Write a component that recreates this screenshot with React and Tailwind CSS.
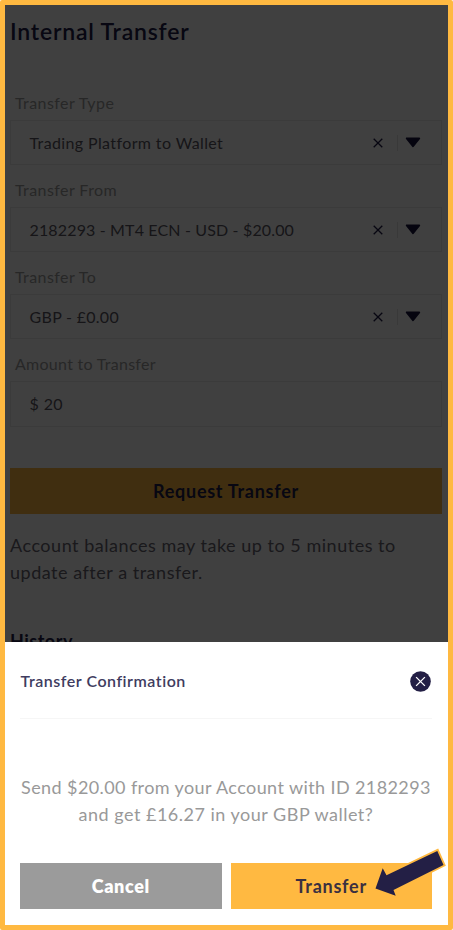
import React, { useState } from 'react';

const ClearIcon = () => (
  <svg viewBox="0 0 10 10" fill="none" stroke="#1c1843" strokeWidth="1.3" className="w-[10px] h-[10px]">
    <path d="M0.7 0.7L9.3 9.3M9.3 0.7L0.7 9.3" />
  </svg>
);

const CaretIcon = () => (
  <svg viewBox="0 0 16 11" className="w-4 h-[11px]">
    <path d="M1.8 1.4h12.4L8 9.2z" fill="#17133c" stroke="#17133c" strokeWidth="2" strokeLinejoin="round" />
  </svg>
);

const CloseIcon = () => (
  <svg viewBox="0 0 21 21" fill="none" className="w-[21px] h-[21px]">
    <circle cx="10.5" cy="10.5" r="10.3" fill="#231f45" />
    <path d="M6.1 6.1L14.9 14.9M14.9 6.1L6.1 14.9" stroke="#fff" strokeWidth="1.3" />
  </svg>
);

const ArrowIcon = () => (
  <svg viewBox="0 0 78 54" className="w-[78px] h-[54px]">
    <path
      d="M5.5 43.5L12.7 23.3L16.5 30.3L67.3 6L73.5 20L23.5 45L25.7 50.7z"
      fill="#231f45"
      stroke="#ffb941"
      strokeWidth="3.6"
      paintOrder="stroke"
    />
  </svg>
);

const fields = [
  { label: 'Transfer Type', value: 'Trading Platform to Wallet', valueStyle: 'tracking-[0.38px]' },
  { label: 'Transfer From', value: '2182293 - MT4 ECN - USD - $20.00', valueStyle: 'tracking-[0.15px]' },
  { label: 'Transfer To', value: 'GBP - £0.00', valueStyle: 'tracking-[0.3px]' },
];

function SelectField({ label, value, valueStyle }) {
  return (
    <div className="h-[87px]">
      <label className="block h-[29px] pl-[5px] text-base leading-6 tracking-[0.42px] text-[#9c9c9c]">
        {label}
      </label>
      <div className="h-[45px] flex items-center border border-[#e9e9e9] pl-[18.5px] pr-5">
        <span className={`flex-1 whitespace-nowrap text-base text-[#59565f] ${valueStyle}`}>{value}</span>
        <button type="button" aria-label="Clear"><ClearIcon /></button>
        <span className="ml-[14px] mr-[7px] h-4 w-px bg-[#e4e4e4]" />
        <CaretIcon />
      </div>
    </div>
  );
}

function App() {
  const [amount, setAmount] = useState('20');

  return (
    <div className="relative h-[930px] w-[453px] overflow-hidden rounded-[2px] border-5 border-[#ffb941] bg-white font-['Lato',sans-serif]">
      <div className="pl-[5px] pr-1.5 pt-[11px]">
        <h1 className="h-[75px] text-[23px] leading-[30px] font-semibold tracking-[0.8px] text-[#201c48]">Internal Transfer</h1>

        {fields.map((field) => (
          <SelectField key={field.label} {...field} />
        ))}

        <label className="block h-[29px] pl-[5px] text-base leading-6 tracking-[0.28px] text-[#9c9c9c]">
          Amount to Transfer
        </label>
        <div className="flex h-[46px] items-center gap-[5px] border border-[#e9e9e9] pl-[18.5px] pb-px text-base text-[#59565f]">
          <span>$</span>
          <input
            type="text"
            value={amount}
            onChange={(e) => setAmount(e.target.value)}
            className="w-40 bg-transparent tracking-[0.3px] outline-none"
          />
        </div>

        <button type="button" className="mt-[41px] block h-[46px] w-full bg-[#ffb941] text-lg font-bold tracking-[0.72px] text-[#201c48]">
          Request Transfer
        </button>

        <p className="mt-[18px] text-lg leading-[27px] tracking-[0.52px] text-[#68656f]">
          Account balances may take up to 5 minutes to
          <br />
          update after a transfer.
        </p>

        <h2 className="mt-[42px] text-lg leading-[27px] font-bold tracking-[0.5px] text-[#201c48]">History</h2>
      </div>

      {/* Modal over the form */}
      <div className="absolute inset-0 flex flex-col justify-end bg-black/75">
        <div className="h-[283px] bg-white pl-[15px] pr-4">
          <div className="flex h-[77px] items-center justify-between border-b border-[#f6f6f6] pt-[2px]">
            <h3 className="pl-[0.5px] text-base font-semibold tracking-[0.53px] text-[#403c60]">Transfer Confirmation</h3>
            <button type="button" aria-label="Close" className="pr-px"><CloseIcon /></button>
          </div>
          <p className="mt-[55px] whitespace-nowrap text-center text-lg leading-[27px] text-[#999999]">
            <span className="tracking-[0.4px]">Send $20.00 from your Account with ID 2182293</span>
            <br />
            <span className="tracking-[0.5px]">and get £16.27 in your GBP wallet?</span>
          </p>
          <div className="mt-[35px] grid grid-cols-2 gap-[9px]">
            <button type="button" className="h-[46px] bg-[#9b9b9b] text-lg font-extrabold tracking-[0.6px] text-white">Cancel</button>
            <button type="button" className="h-[46px] bg-[#ffb941] text-lg font-bold tracking-[0.75px] text-[#3b3040]">Transfer</button>
          </div>
        </div>
        <div className="absolute top-[840px] left-[365px]">
          <ArrowIcon />
        </div>
      </div>
    </div>
  );
}

export default App;
